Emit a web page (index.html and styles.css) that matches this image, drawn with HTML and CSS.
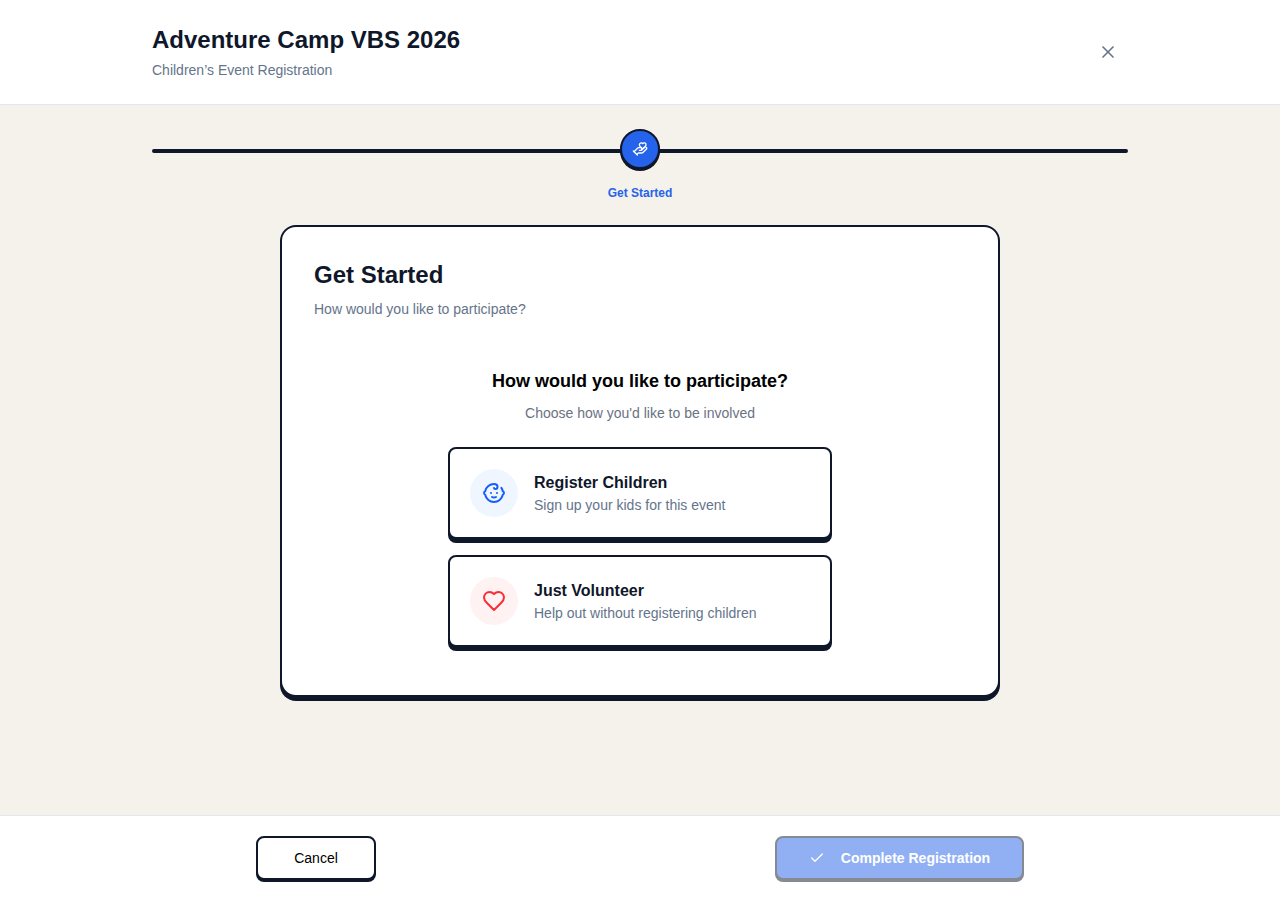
FILE: index.html
```html
<!DOCTYPE html>
<html lang="en">

<head>
    <meta charset="UTF-8">
    <meta name="viewport" content="width=device-width, initial-scale=1.0">
    <title>Adventure Camp VBS 2026</title>
    <link rel="stylesheet" href="styles.css">
</head>

<body>
    <header class="top-bar">
        <div class="top-bar-inner">
            <div>
                <h1 class="event-title">Adventure Camp VBS 2026</h1>
                <p class="event-subtitle">Children’s Event Registration</p>
            </div>
            <button class="close-button" aria-label="Close">
                <svg width="20" height="20" viewBox="0 0 24 24" fill="none" stroke="currentColor" stroke-width="2" stroke-linecap="round" stroke-linejoin="round">
                    <path d="M18 6 6 18"/>
                    <path d="m6 6 12 12"/>
                </svg>
            </button>
        </div>
    </header>

    <main class="main-area">
        <div class="stepper">
            <div class="stepper-line"></div>
            <div class="step">
                <div class="step-circle">
                    <svg width="16" height="16" viewBox="0 0 24 24" fill="none" stroke="currentColor" stroke-width="2" stroke-linecap="round" stroke-linejoin="round">
                        <path d="M11 14h2a2 2 0 1 0 0-4h-3c-.6 0-1.1.2-1.4.6L3 16"/>
                        <path d="m7 20 1.6-1.4c.3-.4.8-.6 1.4-.6h4c1.1 0 2.1-.4 2.8-1.2l4.6-4.4a2 2 0 0 0-2.75-2.91l-4.2 3.9"/>
                        <path d="m2 15 6 6"/>
                        <path d="M19.5 8.5c.7-.7 1.5-1.6 1.5-2.7A2.73 2.73 0 0 0 16 4a2.78 2.78 0 0 0-5 1.8c0 1.2.8 2 1.5 2.8L16 12Z"/>
                    </svg>
                </div>
                <span class="step-label">Get Started</span>
            </div>
        </div>

        <section class="panel">
            <h2 class="panel-title">Get Started</h2>
            <p class="panel-subtitle">How would you like to participate?</p>

            <div class="choice-area">
                <h3 class="choice-title">How would you like to participate?</h3>
                <p class="choice-subtitle">Choose how you'd like to be involved</p>

                <div class="option-list">
                    <button class="option-card">
                        <span class="option-icon option-icon-blue">
                            <svg width="24" height="24" viewBox="0 0 24 24" fill="none" stroke="currentColor" stroke-width="2" stroke-linecap="round" stroke-linejoin="round">
                                <path d="M10 16c.5.3 1.2.5 2 .5s1.5-.2 2-.5"/>
                                <path d="M15 12h.01"/>
                                <path d="M19.38 6.813A9 9 0 0 1 20.8 10.2a2 2 0 0 1 0 3.6 9 9 0 0 1-17.6 0 2 2 0 0 1 0-3.6A9 9 0 0 1 12 3c2 0 3.5 1.1 3.5 2.5s-.9 2.5-2 2.5c-.8 0-1.5-.4-1.5-1"/>
                                <path d="M9 12h.01"/>
                            </svg>
                        </span>
                        <span class="option-text">
                            <span class="option-name">Register Children</span>
                            <span class="option-desc">Sign up your kids for this event</span>
                        </span>
                    </button>

                    <button class="option-card">
                        <span class="option-icon option-icon-red">
                            <svg width="24" height="24" viewBox="0 0 24 24" fill="none" stroke="currentColor" stroke-width="2" stroke-linecap="round" stroke-linejoin="round">
                                <path d="M19 14c1.49-1.46 3-3.21 3-5.5A5.5 5.5 0 0 0 16.5 3c-1.76 0-3 .5-4.5 2-1.5-1.5-2.74-2-4.5-2A5.5 5.5 0 0 0 2 8.5c0 2.3 1.5 4.05 3 5.5l7 7Z"/>
                            </svg>
                        </span>
                        <span class="option-text">
                            <span class="option-name">Just Volunteer</span>
                            <span class="option-desc">Help out without registering children</span>
                        </span>
                    </button>
                </div>
            </div>
        </section>
    </main>

    <footer class="bottom-bar">
        <div class="bottom-bar-inner">
            <button class="btn-cancel">Cancel</button>
            <button class="btn-complete" disabled>
                <svg width="16" height="16" viewBox="0 0 24 24" fill="none" stroke="currentColor" stroke-width="2" stroke-linecap="round" stroke-linejoin="round">
                    <path d="M20 6 9 17l-5-5"/>
                </svg>
                Complete Registration
            </button>
        </div>
    </footer>
</body>

</html>
```

FILE: styles.css
```css
* {
    box-sizing: border-box;
}

body {
    font-family: "Liberation Sans", Arial, sans-serif;
    margin: 0;
    height: 900px;
    display: flex;
    flex-direction: column;
    background-color: #f5f1eb;
    color: #0f172a;
    overflow: hidden;
}

h1,
h2,
h3,
p {
    margin: 0;
}

button {
    font-family: inherit;
    cursor: pointer;
}

/* header */

.top-bar {
    height: 105px;
    background-color: #fff;
    border-bottom: 1px solid #e2e8f0;
}

.top-bar-inner {
    width: 976px;
    margin: 0 auto;
    padding-top: 24px;
    display: flex;
    justify-content: space-between;
}

.event-title {
    font-size: 24px;
    line-height: 32px;
    font-weight: 700;
}

.event-subtitle {
    margin-top: 4px;
    font-size: 14px;
    line-height: 20px;
    color: #64748b;
}

.close-button {
    width: 36px;
    height: 36px;
    margin: 10px 2px 0 0;
    padding: 0;
    border: none;
    background: none;
    color: #64748b;
    display: flex;
    align-items: center;
    justify-content: center;
}

/* stepper */

.main-area {
    flex: 1;
    padding-top: 24px;
}

.stepper {
    position: relative;
    width: 976px;
    margin: 0 auto;
    display: flex;
    justify-content: center;
}

.stepper-line {
    position: absolute;
    left: 0;
    right: 0;
    top: 20px;
    height: 4px;
    border-radius: 2px;
    background-color: #0f172a;
}

.step {
    position: relative;
    display: flex;
    flex-direction: column;
    align-items: center;
}

.step-circle {
    width: 40px;
    height: 40px;
    border: 2px solid #0f172a;
    border-radius: 50%;
    background-color: #2563eb;
    box-shadow: 0 2px 0 #0f172a;
    color: #fff;
    display: flex;
    align-items: center;
    justify-content: center;
}

.step-label {
    margin-top: 16px;
    font-size: 12px;
    line-height: 16px;
    font-weight: 700;
    color: #2563eb;
}

/* main card */

.panel {
    width: 720px;
    height: 472px;
    margin: 24px auto 0;
    padding: 32px;
    background-color: #fff;
    border: 2px solid #0f172a;
    border-radius: 16px;
    box-shadow: 0 4px 0 #0f172a;
}

.panel-title {
    font-size: 24px;
    line-height: 32px;
    font-weight: 700;
}

.panel-subtitle {
    margin-top: 8px;
    font-size: 14px;
    line-height: 20px;
    color: #64748b;
}

.choice-area {
    margin-top: 48px;
    display: flex;
    flex-direction: column;
    align-items: center;
}

.choice-title {
    font-size: 18px;
    line-height: 28px;
    font-weight: 700;
    color: #000;
}

.choice-subtitle {
    margin-top: 8px;
    font-size: 14px;
    line-height: 20px;
    color: #6a7282;
}

.option-list {
    width: 384px;
    margin-top: 24px;
    display: flex;
    flex-direction: column;
    gap: 16px;
}

.option-card {
    height: 92px;
    padding: 0 20px;
    display: flex;
    align-items: center;
    gap: 16px;
    text-align: left;
    background-color: #fff;
    border: 2px solid #0f172a;
    border-radius: 8px;
    box-shadow: 0 4px 0 #0f172a;
}

.option-icon {
    width: 48px;
    height: 48px;
    flex-shrink: 0;
    border-radius: 50%;
    display: flex;
    align-items: center;
    justify-content: center;
}

.option-icon-blue {
    background-color: #eff6ff;
    color: #155dfc;
}

.option-icon-red {
    background-color: #fef2f2;
    color: #fb2c36;
}

.option-text {
    display: flex;
    flex-direction: column;
}

.option-name {
    font-size: 16px;
    line-height: 24px;
    font-weight: 700;
    color: #0f172a;
}

.option-desc {
    font-size: 14px;
    line-height: 20px;
    color: #64748b;
}

/* footer */

.bottom-bar {
    height: 85px;
    background-color: #fff;
    border-top: 1px solid #e2e8f0;
}

.bottom-bar-inner {
    width: 768px;
    margin: 0 auto;
    padding-top: 20px;
    display: flex;
    justify-content: space-between;
}

.btn-cancel,
.btn-complete {
    height: 44px;
    border: 2px solid #0f172a;
    border-radius: 8px;
    box-shadow: 0 2px 0 #0f172a;
    font-size: 14px;
}

.btn-cancel {
    width: 120px;
    background-color: #fff;
    color: #000;
}

.btn-complete {
    width: 249px;
    display: flex;
    align-items: center;
    justify-content: center;
    gap: 16px;
    background-color: #2563eb;
    color: #fff;
    font-weight: 700;
    opacity: 0.5;
    cursor: not-allowed;
}
```
